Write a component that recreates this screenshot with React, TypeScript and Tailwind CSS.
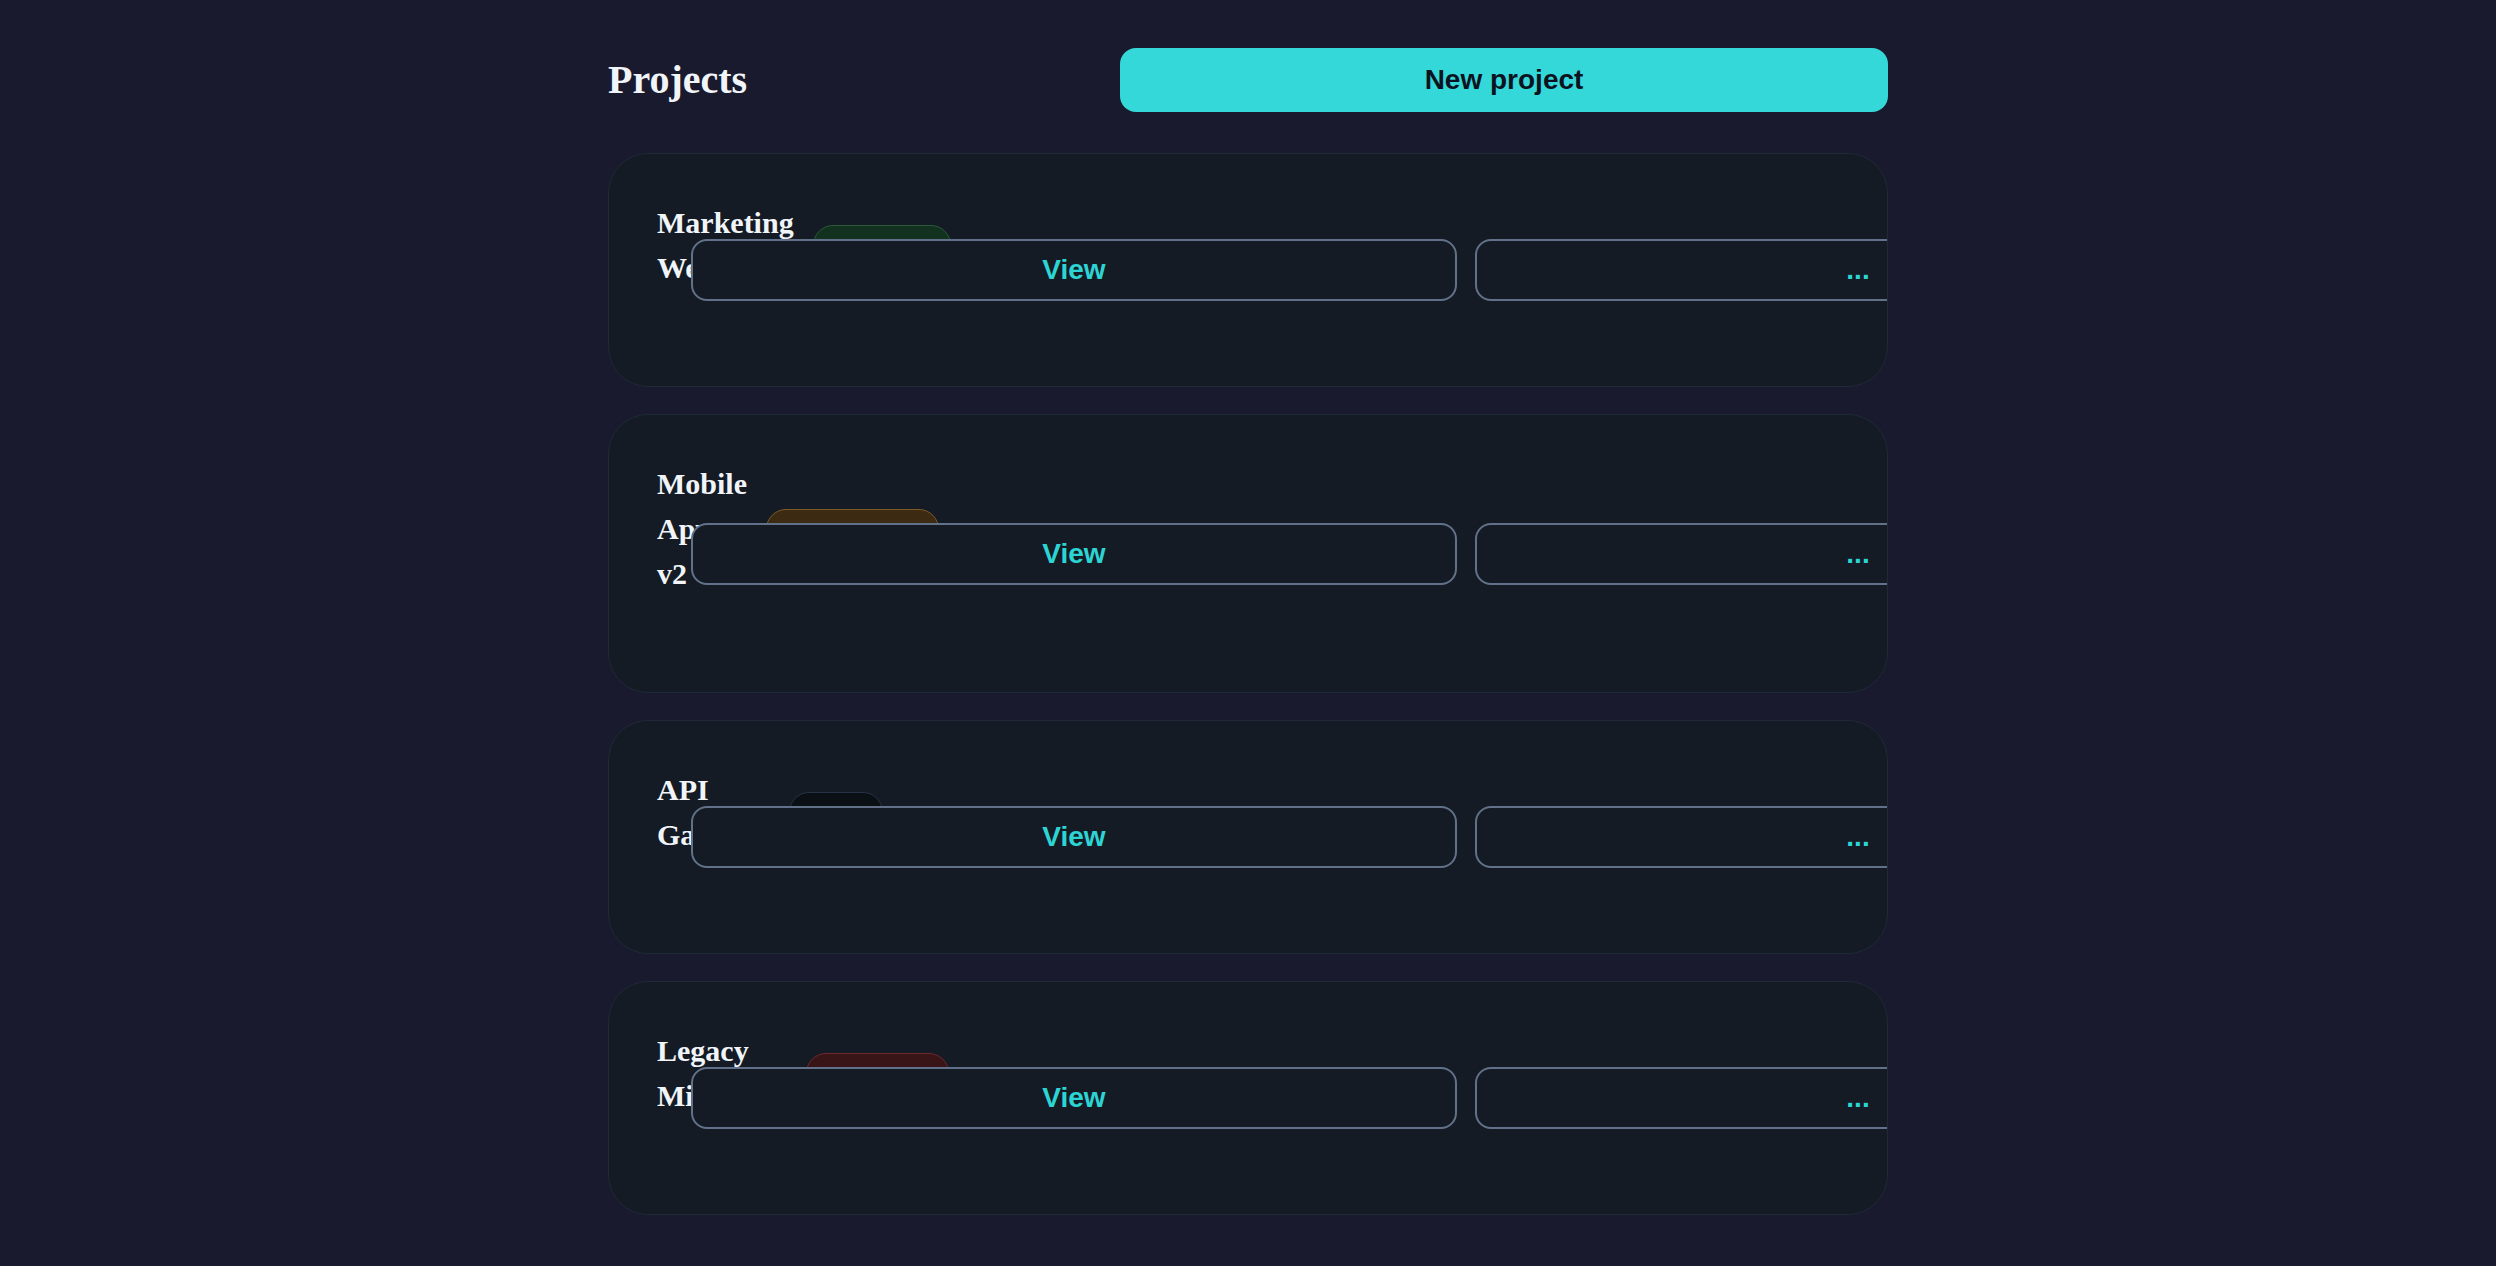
import React from "react";

type Status = "completed" | "development" | "draft" | "deprecated";

type Project = {
  id: string;
  name: string;
  status: Status;
};

const projects: Project[] = [
  { id: "mkt", name: "Marketing Website", status: "completed" },
  { id: "mob", name: "Mobile App v2", status: "development" },
  { id: "api", name: "API Gateway", status: "draft" },
  { id: "leg", name: "Legacy Migration", status: "deprecated" },
];

const statusStyles: Record<Status, { label: string; className: string }> = {
  completed: {
    label: "Completed",
    className: "border-[#2a5a3a] bg-[#12321f] text-[#4ade80]",
  },
  development: {
    label: "In development",
    className: "border-[#7a5a26] bg-[#3d2a12] text-[#fcd34d]",
  },
  draft: {
    label: "Draft",
    className: "border-[#263246] bg-[#0b1015] text-[#94a3b8]",
  },
  deprecated: {
    label: "Deprecated",
    className: "border-[#6b2a2e] bg-[#3a1518] text-[#f87171]",
  },
};

function StatusBadge({ status }: { status: Status }) {
  const s = statusStyles[status];
  return (
    <span
      className={`inline-flex h-10 shrink-0 items-center whitespace-nowrap rounded-full border px-[27px] pt-[5px] font-['Liberation_Sans',Arial,sans-serif] text-base font-bold ${s.className}`}
    >
      {s.label}
    </span>
  );
}

function ProjectCard({ project }: { project: Project }) {
  return (
    <div className="flex items-center overflow-hidden rounded-[40px] border border-[#1f2937] bg-[#141b24] py-[46px] pl-12">
      {/* Title + status */}
      <div className="flex w-[34px] shrink-0 flex-col pb-[50px]">
        <div className="flex items-center gap-[19px]">
          <h3 className="font-['Liberation_Serif',serif] text-[30px] font-bold leading-[45px] text-[#f1f5f9]">
            {project.name}
          </h3>
          <StatusBadge status={project.status} />
        </div>
      </div>

      {/* Actions */}
      <div className="flex shrink-0 gap-[18px]">
        <button className="h-[62px] w-[766px] shrink-0 rounded-2xl border-2 border-[#62718a] bg-[#141b24] font-['Liberation_Sans',Arial,sans-serif] text-[28px] font-bold text-[#2dd4d4]">
          View
        </button>
        <button className="h-[62px] w-[766px] shrink-0 rounded-2xl border-2 border-[#62718a] bg-[#141b24] font-['Liberation_Sans',Arial,sans-serif] text-[28px] font-bold text-[#2dd4d4]">
          ...
        </button>
      </div>
    </div>
  );
}

export default function App() {
  return (
    <div className="min-h-screen bg-[#1a1a2e] pb-12 pt-12">
      <div className="mx-auto max-w-7xl">
        {/* Header */}
        <div className="mb-[41px] flex h-16 items-center justify-between">
          <h1 className="font-['Liberation_Serif',serif] text-[40px] font-bold text-[#f1f5f9]">
            Projects
          </h1>
          <button className="h-16 w-3/5 rounded-2xl bg-[#34d8d8] font-['Liberation_Sans',Arial,sans-serif] text-[28px] font-bold text-[#0b1220]">
            New project
          </button>
        </div>

        {/* Project list */}
        <div className="flex flex-col gap-[27px]">
          {projects.map((project) => (
            <ProjectCard key={project.id} project={project} />
          ))}
        </div>
      </div>
    </div>
  );
}
